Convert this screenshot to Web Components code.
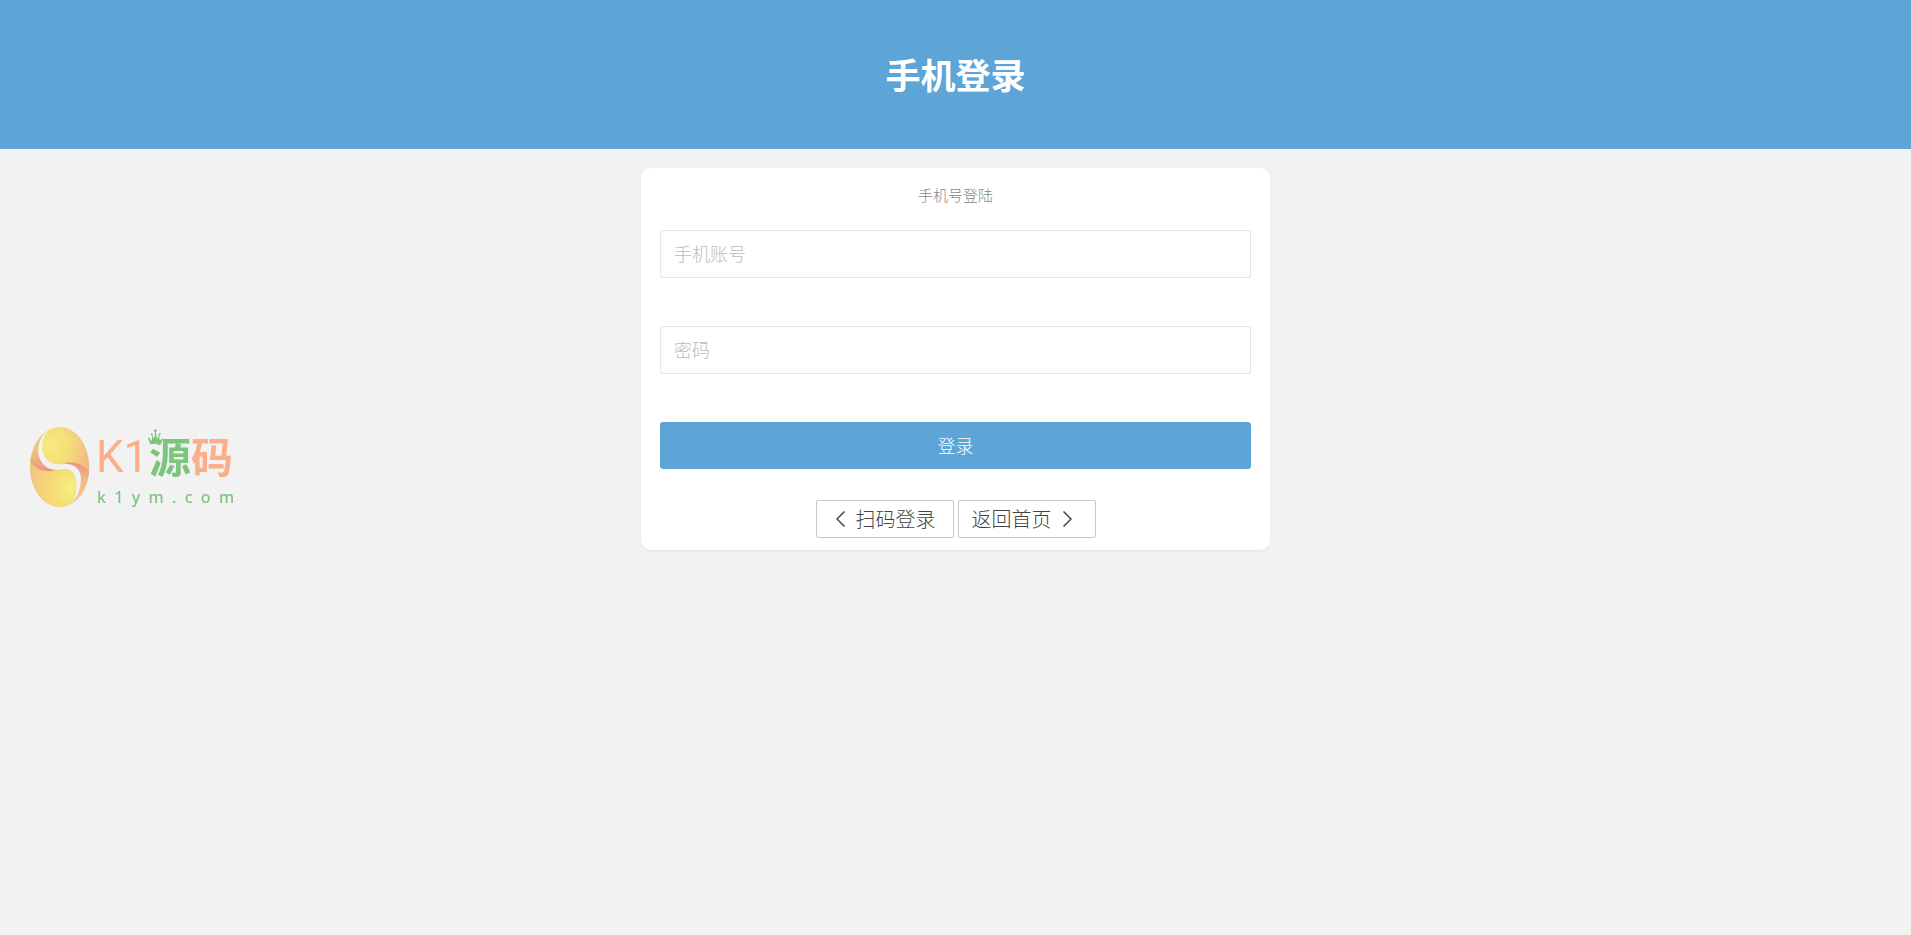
<!DOCTYPE html>
<html lang="zh-CN">
<head>
<meta charset="utf-8">
<meta name="viewport" content="width=device-width, initial-scale=1">
<title>手机登录</title>
<style>
html { --brand: #5da4d7; }
body { margin: 0; min-height: 100vh; background: #f2f2f2; font-family: "Noto Sans CJK SC", sans-serif; }
</style>
</head>
<body>
<login-page></login-page>
<script>
const define = (name, html, setup) => customElements.define(name, class extends HTMLElement {
  constructor() {
    super();
    this.attachShadow({ mode: "open" }).innerHTML = html;
  }
  connectedCallback() { if (setup) setup(this, this.shadowRoot); }
});

define("page-banner", `
<style>
:host { display: block; background: var(--brand); color: #fff; text-align: center; padding: 49px 16px 51px; }
h1 { margin: 0; font-size: 35px; line-height: 49px; font-weight: 700; }
</style>
<h1><slot></slot></h1>`);

define("login-card", `
<style>
:host { display: block; box-sizing: border-box; width: calc(100% - 32px); max-width: 629px; margin: 19px auto;
  padding: 16px 19px 12px; background: #fff; border-radius: 10px; box-shadow: 0 1px 3px rgba(0,0,0,.06); font-weight: 300; }
h2 { margin: 0 0 24px; font-size: 15px; line-height: 22px; font-weight: inherit; color: #7f878c; text-align: center; }
form { display: flex; flex-direction: column; gap: 48px; }
footer { display: flex; justify-content: center; gap: 4px; margin-top: 31px; }
</style>
<h2><slot name="title"></slot></h2>
<form><slot></slot></form>
<footer><slot name="actions"></slot></footer>`);

define("text-field", `
<style>
:host { display: block; }
input { display: block; box-sizing: border-box; width: 100%; height: 48px; margin: 0; padding: 0 13px 3px;
  border: 1px solid #e5e5e5; border-radius: 2px; background: #fff; color: #555; font: inherit; font-size: 18px; outline: 0; }
input::placeholder { color: #bbb; opacity: 1; }
input:focus { border-color: var(--brand); }
</style>
<input>`, (host, root) => {
  const input = root.querySelector("input");
  input.type = host.getAttribute("type") || "text";
  input.placeholder = host.getAttribute("label");
  input.setAttribute("aria-label", host.getAttribute("label"));
});

define("submit-button", `
<style>
:host { display: block; }
button { display: block; width: 100%; height: 47px; padding: 0; border: 0; border-radius: 3px;
  background: var(--brand); color: #fff; font: inherit; font-size: 18px; line-height: 47px; cursor: pointer; }
</style>
<button type="button"><slot></slot></button>`);

define("nav-button", `
<style>
:host { display: block; }
button { display: flex; align-items: center; gap: 11px; box-sizing: border-box; width: 138px; height: 38px; padding: 0 13px 0 19px;
  border: 1px solid #c9c9c9; border-radius: 2px; background: #fff; color: #444; font: inherit; font-size: 20px;
  line-height: 36px; white-space: nowrap; cursor: pointer; }
:host([dir-to="next"]) button { flex-direction: row-reverse; justify-content: flex-end; padding: 0 13px; }
:host([dir-to="next"]) svg { transform: scaleX(-1); }
svg { flex: none; }
</style>
<button type="button">
  <svg width="9" height="16" viewBox="0 0 9 16" fill="none" stroke="currentColor" stroke-width="1.5" aria-hidden="true"><path d="M8.500.5 1 8l7.500 7.500"/></svg>
  <span><slot></slot></span>
</button>`);

define("site-logo", `
<style>
:host { display: block; }
svg { display: block; }
text { font-family: "Noto Sans CJK SC", sans-serif; }
.latin { font-family: Roboto, sans-serif; }
.url { font-family: "Noto Sans", sans-serif; font-weight: 500; }
.orange { fill: #faaf8a; }
.green { fill: #7dc57d; }
</style>
<svg width="208" height="90" viewBox="0 0 208 90" role="img" aria-label="K1源码">
  <defs>
    <radialGradient id="top" gradientUnits="userSpaceOnUse" cx="122" cy="108" r="115">
      <stop offset="0" stop-color="#f5ec7e"/><stop offset=".45" stop-color="#f5df78"/><stop offset="1" stop-color="#f1bd86"/>
    </radialGradient>
    <radialGradient id="bottom" gradientUnits="userSpaceOnUse" cx="184" cy="234" r="125">
      <stop offset="0" stop-color="#f5f07e"/><stop offset=".5" stop-color="#f5dc76"/><stop offset="1" stop-color="#f2c681"/>
    </radialGradient>
    <linearGradient id="left" x1="0" y1="0" x2="0" y2="1">
      <stop offset="0" stop-color="#f4d17c"/><stop offset=".6" stop-color="#f1bd85"/><stop offset="1" stop-color="#ea9580"/>
    </linearGradient>
    <linearGradient id="right" x1="0" y1="0" x2="0" y2="1">
      <stop offset="0" stop-color="#ea9580"/><stop offset=".4" stop-color="#f1b985"/><stop offset="1" stop-color="#f3ce7f"/>
    </linearGradient>
    <clipPath id="egg"><ellipse cx="149" cy="171" rx="89" ry="120"/></clipPath>
  </defs>
  <g transform="translate(-18 -14) scale(.33333)">
    <g clip-path="url(#egg)">
      <rect x="58" y="48" width="184" height="246" fill="url(#top)"/>
      <path d="M58 152C78 182 120 186 158 180C196 178 206 205 200 230C195 252 190 268 182 294H58Z" fill="url(#bottom)"/>
      <path d="M112 55C88 82 78 120 92 148C102 169 118 180 138 181C104 189 72 178 58 150V55Z" fill="url(#left)"/>
      <path d="M160 159C196 152 230 166 242 192V294H182C208 258 220 215 209 186C202 168 182 162 160 159Z" fill="url(#right)"/>
    </g>
    <path d="M114 60C94 87 91 122 107 145C122 165 145 164 166 162C199 162 214 183 213 210C212 238 201 263 186 280C199 252 204 222 196 200C188 179 170 176 148 179C124 182 101 172 90 148C78 119 87 84 114 60Z" fill="#f3f1f1"/>
    <path class="green" d="M421 103 414 83 426 93 425 70 433 89 436 57 441 88 450 68 447 94 459 84 452 104Q436 99 421 103Z"/>
    <g class="green"><circle cx="436" cy="62" r="4"/><circle cx="425" cy="73" r="3"/><circle cx="449" cy="72" r="3"/><circle cx="417" cy="86" r="3"/></g>
  </g>
  <text class="latin orange" x="68" y="48" font-size="44">K1</text>
  <text x="121" y="49" font-size="42" font-weight="700"><tspan class="green">源</tspan><tspan class="orange">码</tspan></text>
  <text class="url green" x="69" y="79" font-size="16">k&nbsp;&nbsp;1&nbsp;&nbsp;y&nbsp;&nbsp;m&nbsp;&nbsp;.&nbsp;&nbsp;c&nbsp;&nbsp;o&nbsp;&nbsp;m</text>
</svg>`);

define("login-page", `
<style>
:host { display: block; }
/* floating watermark, over the page at its left edge */
site-logo { position: fixed; left: 28px; top: calc(50% - 44px); pointer-events: none; }
</style>
<page-banner>手机登录</page-banner>
<main>
  <login-card>
    <span slot="title">手机号登陆</span>
    <text-field label="手机账号"></text-field>
    <text-field label="密码" type="password"></text-field>
    <submit-button>登录</submit-button>
    <nav-button slot="actions" dir-to="back">扫码登录</nav-button>
    <nav-button slot="actions" dir-to="next">返回首页</nav-button>
  </login-card>
</main>
<site-logo></site-logo>`);
</script>
</body>
</html>
